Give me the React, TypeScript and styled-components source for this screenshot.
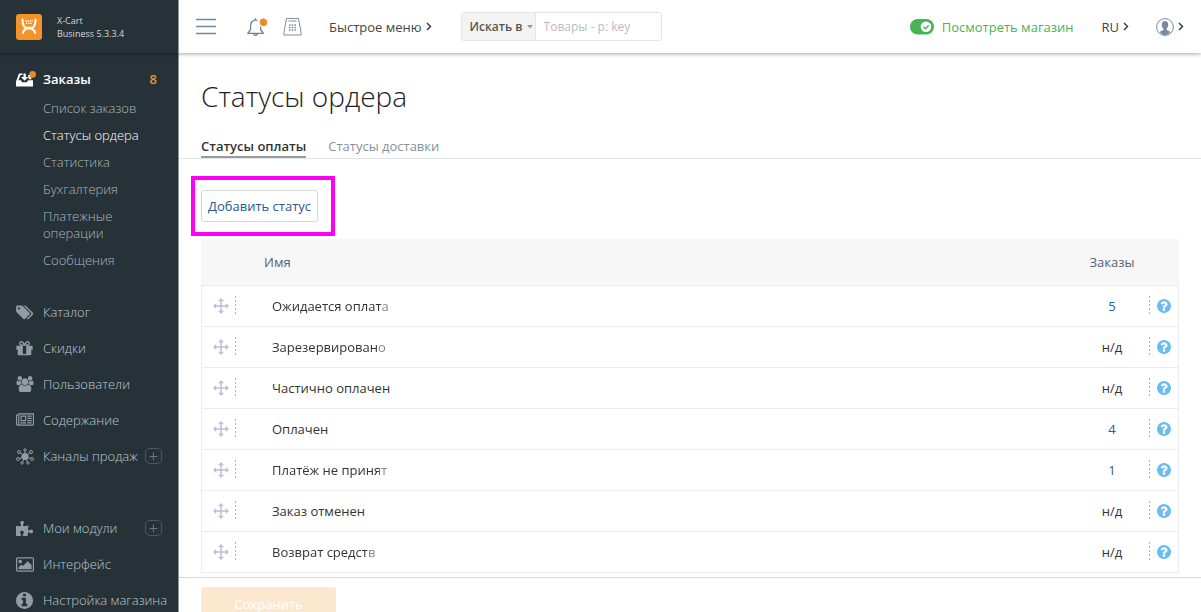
import React from "react";
import styled, { createGlobalStyle } from "styled-components";
import { FaPuzzlePiece } from "react-icons/fa";

const Global = createGlobalStyle`
  *, *::before, *::after { box-sizing: border-box; }
  body { margin: 0; background: #fff; }
  body, button, input { font-family: "Open Sans", "Noto Sans", sans-serif; font-size: 13px; }
  a { text-decoration: none; color: inherit; }
  ul { list-style: none; margin: 0; padding: 0; }
  button { cursor: pointer; }
  svg { display: block; flex: none; }
`;

const Page = styled.div`
  display: flex;
  flex-direction: column;
  height: 100vh;
  overflow: hidden;
  color: #333;
`;

const Header = styled.header`
  display: flex;
  flex: none;
  height: 53px;
  position: relative;
  z-index: 1;
  box-shadow: 0 1px 4px rgba(0, 0, 0, 0.35);
`;

const Brand = styled.a`
  display: flex;
  align-items: center;
  flex: none;
  gap: 15px;
  width: 179px;
  padding-left: 16px;
  background: #263238;
  border-right: 1px solid #8d9599;
  color: #d3d9dc;
  font-size: 9px;
  line-height: 13px;
`;

const TopBar = styled.div`
  display: flex;
  align-items: center;
  flex: 1;
  min-width: 0;
  padding: 0 17px;
  background: #fff;
`;

const IconButton = styled.button<{ $gap: number }>`
  display: flex;
  padding: 0;
  border: 0;
  background: none;
  color: #7189a0;
  margin-right: ${(p) => p.$gap}px;
`;

const MenuButton = styled.button<{ $right: number }>`
  display: flex;
  align-items: center;
  gap: 4px;
  padding: 0;
  border: 0;
  background: none;
  color: #444;
  line-height: 20px;
  white-space: nowrap;
  margin-right: ${(p) => p.$right}px;
`;

const Search = styled.form`
  display: flex;
  width: 201px;
  height: 29px;
  border: 1px solid #e4e4e4;
  border-radius: 3px;
  overflow: hidden;
`;

const SearchScope = styled.button`
  display: flex;
  align-items: center;
  gap: 4px;
  flex: none;
  width: 74px;
  padding: 0 0 0 8px;
  border: 0;
  border-right: 1px solid #e4e4e4;
  background: #f3f3f3;
  color: #555;
  font-size: 12px;
  font-weight: 600;
  white-space: nowrap;
`;

const SearchInput = styled.input`
  flex: 1;
  min-width: 0;
  padding: 0 8px;
  border: 0;
  outline: 0;
  font-size: 12px;
  &::placeholder { color: #bbb; opacity: 1; }
`;

const StoreLink = styled.a`
  display: flex;
  align-items: center;
  gap: 8px;
  margin: 0 28px 0 auto;
  color: #4ab357;
  line-height: 20px;
  white-space: nowrap;
`;

const Body = styled.div`
  display: flex;
  flex: 1;
  min-height: 0;
`;

const Sidebar = styled.nav`
  flex: none;
  width: 179px;
  padding-top: 10px;
  background: #263238;
  border-right: 1px solid #8d9599;
  color: #b3c0c6;
  font-weight: 300;
`;

const Group = styled.ul`
  margin-bottom: 36px;
`;

const NavRow = styled.li<{ $short?: boolean }>`
  display: flex;
  align-items: center;
  height: ${(p) => (p.$short ? 32 : 36)}px;
  padding: 0 16px;
`;

const NavLink = styled.a<{ $active?: boolean }>`
  display: flex;
  align-items: center;
  gap: 9px;
  flex: 1;
  min-width: 0;
  white-space: nowrap;
  color: ${(p) => (p.$active ? "#fff" : "#bdc9cf")};
  font-weight: ${(p) => (p.$active ? 600 : 300)};
`;

const NavIcon = styled.span`
  display: flex;
  flex: none;
  width: 18px;
  color: #919ca3;
`;

const Count = styled.span`
  margin-right: 5px;
  color: #e3943a;
  font-weight: 600;
`;

const AddButton = styled.button`
  display: flex;
  align-items: center;
  justify-content: center;
  flex: none;
  width: 17px;
  height: 16px;
  padding: 0;
  border: 1px solid #4c5a61;
  border-radius: 5px;
  background: none;
  color: #67757c;
`;

const SubMenu = styled.ul`
  margin-bottom: 20px;
`;

const SubLink = styled.a<{ $active?: boolean }>`
  display: block;
  padding: 5px 36px 5px 43px;
  line-height: 17px;
  color: ${(p) => (p.$active ? "#fff" : "#aab7bd")};
`;

const Main = styled.main`
  flex: 1;
  min-width: 0;
`;

const Title = styled.h1`
  margin: 0;
  padding: 23px 22px 0;
  color: #222;
  font-size: 28px;
  line-height: 40px;
  font-weight: 300;
`;

const Tabs = styled.div`
  display: flex;
  gap: 22px;
  margin-top: 20px;
  padding: 0 22px;
  border-bottom: 1px solid #e2e4e6;
`;

const Tab = styled.a<{ $active?: boolean }>`
  height: 22px;
  line-height: 20px;
  font-weight: ${(p) => (p.$active ? 600 : 400)};
  color: ${(p) => (p.$active ? "#333" : "#87929b")};
  border-bottom: 2px solid ${(p) => (p.$active ? "#929da5" : "transparent")};
`;

const Content = styled.div`
  padding: 31px 22px 4px;
`;

const Highlighted = styled.div`
  display: inline-block;
  vertical-align: top;
  position: relative;
  &::after {
    content: "";
    position: absolute;
    inset: -14px -17px -14px -10px;
    border: 4px solid #ff00f6;
    pointer-events: none;
  }
`;

const AddStatus = styled.button`
  display: block;
  height: 32px;
  padding: 0 6px;
  border: 1px solid #d5d8db;
  border-radius: 3px;
  background: #fff;
  color: #2b568f;
`;

const Table = styled.table`
  width: 100%;
  margin-top: 17px;
  border-collapse: separate;
  border-spacing: 0;
  table-layout: fixed;
  line-height: 18px;
`;

const Th = styled.th<{ $w?: number; $align?: string; $left?: number }>`
  height: 47px;
  width: ${(p) => (p.$w ? `${p.$w}px` : "auto")};
  padding: 0 0 0 ${(p) => p.$left ?? 0}px;
  background: #f7f7f7;
  border-bottom: 1px solid #ececec;
  color: #566074;
  font-weight: 400;
  text-align: ${(p) => p.$align ?? "left"};
`;

const Td = styled.td<{ $align?: string; $left?: number }>`
  height: 41px;
  padding: 0 0 0 ${(p) => p.$left ?? 0}px;
  border-bottom: 1px solid #ececec;
  text-align: ${(p) => p.$align ?? "left"};
  &:first-child { border-left: 1px solid #ececec; }
  &:last-child { border-right: 1px solid #ececec; }
`;

const CellTools = styled.div`
  display: flex;
  align-items: center;
`;

const Dots = styled.span<{ $left: number; $right: number }>`
  width: 1px;
  height: 20px;
  margin: 0 ${(p) => p.$right}px 0 ${(p) => p.$left}px;
  background: repeating-linear-gradient(#aeb1ba 0 2px, transparent 2px 4px);
`;

const PlainButton = styled.button`
  display: flex;
  padding: 0;
  border: 0;
  background: none;
`;

const Name = styled.span<{ $fade?: boolean }>`
  ${(p) => p.$fade && "mask-image: linear-gradient(to left, rgba(0,0,0,.6) 7px, #000 9px);"}
`;

const OrderLink = styled.a`
  color: #1f5fa8;
`;

const Footer = styled.footer`
  padding: 9px 22px;
  border-top: 1px solid #d6d6d6;
  background: #fff;
`;

const Save = styled.button`
  width: 135px;
  height: 34px;
  border: 0;
  border-radius: 3px;
  background: #fbe8cf;
  color: #fff;
`;

type GlyphProps = { box: string; d: string; w: number; h: number };
const Glyph = ({ box, d, w, h }: GlyphProps) => (
  <svg width={w} height={h} viewBox={box} fill="currentColor" aria-hidden="true">
    <path d={d} />
  </svg>
);

const TagsIcon = () => (
  <Glyph w={18} h={17} box="-10 0 1990 1792" d="M448 448q0-53-37.5-90.5t-90.5-37.5-90.5 37.5-37.5 90.5 37.5 90.5 90.5 37.5 90.5-37.5 37.500-90.500zm1067 576q0 53-37 90l-491 492q-39 37-91 37-53 0-90-37l-715-716q-38-37-64.5-101t-26.5-117v-416q0-52 38-90t90-38h416q53 0 117 26.5t102 64.5l715 714q37 39 37 91zm384 0q0 53-37 90l-491 492q-39 37-91 37-36 0-59-14t-53-45l470-470q37-37 37-90 0-52-37-91l-715-714q-38-38-102-64.5t-117-26.5h224q53 0 117 26.5t102 64.5l715 714q37 39 37 91z" />
);
const GiftIcon = () => (
  <Glyph w={17} h={17} box="120 100 1552 1600" d="M1056 1356v-716h-320v716q0 25 18 38.5t46 13.5h192q28 0 46-13.5t18-38.5zm-456-844h195l-126-161q-26-31-69-31-40 0-68 28t-28 68 28 68 68 28zm688-96q0-40-28-68t-68-28q-43 0-69 31l-125 161h194q40 0 68-28t28-68zm376 256v320q0 14-9 23t-23 9h-96v416q0 40-28 68t-68 28h-1088q-40 0-68-28t-28-68v-416h-96q-14 0-23-9t-9-23v-320q0-14 9-23t23-9h440q-93 0-158.5-65.5t-65.5-158.5 65.5-158.5 158.5-65.5q107 0 168 77l128 165 128-165q61-77 168-77 93 0 158.5 65.5t65.5 158.5-65.5 158.5-158.5 65.5h440q14 0 23 9t9 23z" />
);
const UsersIcon = () => (
  <Glyph w={18} h={16} box="-64 0 1920 1792" d="M529 896q-162 5-265 128h-134q-82 0-138-40.5t-56-118.5q0-353 124-353 6 0 43.5 21t97.5 42.5 119 21.5q67 0 133-23-5 37-5 66 0 139 81 256zm1071 637q0 120-73 189.5t-194 69.5h-874q-121 0-194-69.5t-73-189.5q0-53 3.5-103.5t14-109 26.5-108.5 43-97.5 62-81 85.5-53.5 111.5-20q10 0 43 21.5t73 48 107 48 135 21.5 135-21.5 107-48 73-48 43-21.5q61 0 111.5 20t85.5 53.5 62 81 43 97.5 26.5 108.5 14 109 3.5 103.5zm-1024-1277q0 106-75 181t-181 75-181-75-75-181 75-181 181-75 181 75 75 181zm704 384q0 159-112.5 271.5t-271.5 112.5-271.5-112.5-112.5-271.5 112.5-271.5 271.5-112.5 271.5 112.5 112.5 271.5zm576 225q0 78-56 118.5t-138 40.5h-134q-103-123-265-128 81-117 81-256 0-29-5-66 66 23 133 23 59 0 119-21.5t97.5-42.5 43.5-21q124 0 124 353zm-128-609q0 106-75 181t-181 75-181-75-75-181 75-181 181-75 181 75 75 181z" />
);
const NewsIcon = () => (
  <Glyph w={18} h={16} box="0 0 2048 1792" d="M1024 512h-384v384h384v-384zm128 640v128h-640v-128h640zm0-768v640h-640v-640h640zm640 768v128h-512v-128h512zm0-256v128h-512v-128h512zm0-256v128h-512v-128h512zm0-256v128h-512v-128h512zm-1536 960v-960h-128v960q0 26 19 45t45 19 45-19 19-45zm1664 0v-1088h-1536v1088q0 33-11 64h1483q26 0 45-19t19-45zm128-1216v1216q0 80-56 136t-136 56h-1664q-80 0-136-56t-56-136v-1088h256v-128h1792z" />
);
const PictureIcon = () => (
  <Glyph w={18} h={17} box="-64 0 1920 1792" d="M576 576q0 80-56 136t-136 56-136-56-56-136 56-136 136-56 136 56 56 136zm1024 384v448h-1408v-192l320-320 160 160 512-512zm96-704h-1600q-13 0-22.5 9.5t-9.5 22.5v1216q0 13 9.5 22.5t22.5 9.5h1600q13 0 22.5-9.5t9.5-22.5v-1216q0-13-9.5-22.5t-22.5-9.5zm160 32v1216q0 66-47 113t-113 47h-1600q-66 0-113-47t-47-113v-1216q0-66 47-113t113-47h1600q66 0 113 47t47 113z" />
);
const InfoIcon = () => (
  <Glyph w={17} h={17} box="128 128 1536 1536" d="M1152 1376v-160q0-14-9-23t-23-9h-96v-512q0-14-9-23t-23-9h-320q-14 0-23 9t-9 23v160q0 14 9 23t23 9h96v320h-96q-14 0-23 9t-9 23v160q0 14 9 23t23 9h448q14 0 23-9t9-23zm-128-896v-160q0-14-9-23t-23-9h-192q-14 0-23 9t-9 23v160q0 14 9 23t23 9h192q14 0 23-9t9-23zm640 416q0 209-103 385.5t-279.5 279.5-385.5 103-385.5-103-279.5-279.5-103-385.5 103-385.5 279.5-279.5 385.5-103 385.5 103 279.5 279.5 103 385.5z" />
);
const HelpIcon = () => (
  <svg width="14" height="14" viewBox="128 128 1536 1536" fill="#6cbcf0" aria-hidden="true">
    <path d="M1024 1376v-192q0-14-9-23t-23-9h-192q-14 0-23 9t-9 23v192q0 14 9 23t23 9h192q14 0 23-9t9-23zm256-672q0-88-55.5-163t-138.5-116-170-41q-243 0-371 213-15 24 8 42l132 100q7 6 19 6 16 0 25-12 53-68 86-92 34-24 86-24 48 0 85.5 26t37.5 59q0 38-20 61t-68 45q-63 28-115.5 86.5t-52.5 125.5v36q0 14 9 23t23 9h192q14 0 23-9t9-23q0-19 21.5-49.5t54.5-49.5q32-18 49-28.5t46-35 44.5-48 28-60.5 12.5-81zm384 192q0 209-103 385.5t-279.5 279.5-385.5 103-385.5-103-279.5-279.5-103-385.5 103-385.5 279.5-279.5 385.5-103 385.5 103 279.5 279.5 103 385.5z" />
  </svg>
);
const ChannelsIcon = () => (
  <svg width="18" height="17" viewBox="0 0 18 17" fill="none" stroke="currentColor" aria-hidden="true">
    <circle cx="9" cy="8.5" r="3.6" fill="currentColor" stroke="none" />
    <path d="M9 2v4M4 4.5l3 2.5M14 4.5l-3 2.5M3 10.5l4-1M15 10.5l-4-1M6.5 14l1.5-3M11.5 14l-1.5-3" />
    <g fill="#263238">
      <circle cx="9" cy="1.9" r="1.2" />
      <circle cx="3" cy="4" r="1.5" />
      <circle cx="15" cy="4" r="1.5" />
      <circle cx="2" cy="11" r="1.5" />
      <circle cx="16" cy="11" r="1.5" />
      <circle cx="6" cy="15" r="1.2" />
      <circle cx="12" cy="15" r="1.2" />
    </g>
  </svg>
);
const OrdersIcon = () => (
  <svg width="20" height="17" viewBox="0 0 20 17" aria-hidden="true">
    <path d="M0 15.500V10.500L3 2.500h3.500V4H4.500L2.500 9.300H5l1 2h5l1-2h5v6.200z" fill="#fff" />
    <path d="M7.500 2.500h2.300V6h2.400L8.600 9.700 5 6h2.500zM12 4h2l1.800 4.300h-3z" fill="#fff" />
    <circle cx="16.600" cy="3.400" r="3.300" fill="#f08c1e" />
  </svg>
);
const PlusIcon = () => (
  <svg width="9" height="9" viewBox="0 0 9 9" stroke="currentColor" aria-hidden="true">
    <path d="M0.500 4.500h8M4.500 0.500v8" />
  </svg>
);
const Logo = () => (
  <svg width="26" height="26" viewBox="0 0 26 26" aria-hidden="true">
    <rect width="26" height="26" rx="3" fill="#f39328" />
    <path d="M6.500 5.500c0 4.500 1 7 3 8.500v1.500c-1.500.5-2.500 1.800-2.500 3.500M19.500 5.500c0 4.500-1 7-3 8.500v1.500c1.500.5 2.500 1.800 2.500 3.500" fill="none" stroke="#fff" strokeWidth="2" strokeLinecap="round" />
    <path d="M9.300 7h7.500M9.800 9.300h6.500" stroke="#fff" strokeWidth="1.300" strokeDasharray="1.500 .8" />
    <path d="M9 12.800h8v2.700H9z" fill="#fff" />
  </svg>
);
const BurgerIcon = () => (
  <svg width="20" height="18" viewBox="0 0 20 18" stroke="currentColor" strokeWidth="1.600" aria-hidden="true">
    <path d="M0 1.500h20M0 8.500h20M0 15.500h20" />
  </svg>
);
const BellIcon = () => (
  <svg width="20" height="20" viewBox="0 0 20 20" fill="none" aria-hidden="true">
    <path d="M8.200 3.100C5 3.700 3.600 6 3.600 9v3.500L.8 16.300h15.600l-2.800-3.800V9.500M8.200 3.100V1.300M8.200 3.100c.8-.1 1.500 0 2.200.2M6.700 16.600c.2 2.300 3.500 2.300 3.700 0" stroke="#6c8298" strokeWidth="1.300" strokeLinejoin="round" />
    <circle cx="16.400" cy="5.300" r="3.700" fill="#f08c1e" />
  </svg>
);
const PosIcon = () => (
  <svg width="19" height="19" viewBox="0 0 19 19" fill="none" stroke="#7c8e9f" aria-hidden="true">
    <path d="M3.500 1.500h12l2.600 14v2.500H.900v-2.500zM5.500 4h8" strokeLinejoin="round" />
    <path d="M6 8h7M6 10.500h7M6 13h7" strokeWidth="1.400" strokeDasharray="1.600 1.100" />
  </svg>
);
const Chevron = () => (
  <svg width="6" height="9" viewBox="0 0 6 9" fill="none" stroke="#333" strokeWidth="1.400" aria-hidden="true">
    <path d="M1 1l3.500 3.500L1 8" />
  </svg>
);
const Caret = () => (
  <svg width="6" height="4" viewBox="0 0 6 4" fill="#999" aria-hidden="true">
    <path d="M0 0h6L3 3.500z" />
  </svg>
);
const ToggleIcon = () => (
  <svg width="24" height="16" viewBox="0 0 24 16" aria-hidden="true">
    <rect width="24" height="15.500" rx="7.700" fill="#46b355" />
    <circle cx="16" cy="7.800" r="5.300" fill="#fff" />
    <path d="M13.500 7.800l2 2 3.200-3.500" fill="none" stroke="#46b355" strokeWidth="1.300" />
  </svg>
);
const AvatarIcon = () => (
  <svg width="18" height="18" viewBox="0 0 18 18" aria-hidden="true">
    <circle cx="9" cy="9" r="8.400" fill="#fff" stroke="#778ba0" />
    <path d="M9 3c2.200 0 3.200 1.500 3.200 3.700 0 2-.8 3.200-1.600 4v1.400c1 .7 2.800.9 3.600 2C12.800 16 11 17 9 17s-3.800-1-5.200-2.900c.8-1.100 2.600-1.300 3.600-2v-1.400c-.8-.8-1.600-2-1.600-4C5.800 4.500 6.800 3 9 3z" fill="#778ba0" />
  </svg>
);
const MoveIcon = () => (
  <svg width="16" height="16" viewBox="0 0 16 16" aria-hidden="true">
    <path d="M8 2v12M2 8h12" stroke="#b9c1d2" strokeWidth="1.500" />
    <path d="M8 0l3 3.200H5zM8 16l3-3.200H5zM0 8l3.200-3v6zM16 8l-3.200-3v6z" fill="#b9c1d2" />
  </svg>
);

const subItems = ["Список заказов", "Статусы ордера", "Статистика", "Бухгалтерия", "Платежные операции", "Сообщения"];

const groups: { label: string; icon: React.ReactNode; add?: boolean }[][] = [
  [
    { label: "Каталог", icon: <TagsIcon /> },
    { label: "Скидки", icon: <GiftIcon /> },
    { label: "Пользователи", icon: <UsersIcon /> },
    { label: "Содержание", icon: <NewsIcon /> },
    { label: "Каналы продаж", icon: <ChannelsIcon />, add: true },
  ],
  [
    { label: "Мои модули", icon: <FaPuzzlePiece size={17} />, add: true },
    { label: "Интерфейс", icon: <PictureIcon /> },
    { label: "Настройка магазина", icon: <InfoIcon /> },
  ],
];

const rows: { name: string; orders?: number; fade?: boolean }[] = [
  { name: "Ожидается оплата", orders: 5, fade: true },
  { name: "Зарезервировано", fade: true },
  { name: "Частично оплачен" },
  { name: "Оплачен", orders: 4 },
  { name: "Платёж не принят", orders: 1, fade: true },
  { name: "Заказ отменен" },
  { name: "Возврат средств", fade: true },
];

export default function App() {
  return (
    <Page>
      <Global />
      <Header>
        <Brand href="#">
          <Logo />
          <span>
            X-Cart
            <br />
            Business 5.3.3.4
          </span>
        </Brand>
        <TopBar>
          <IconButton $gap={31} aria-label="Меню"><BurgerIcon /></IconButton>
          <IconButton $gap={16} aria-label="Уведомления"><BellIcon /></IconButton>
          <IconButton $gap={27} aria-label="Касса"><PosIcon /></IconButton>
          <MenuButton $right={29}>Быстрое меню <Chevron /></MenuButton>
          <Search>
            <SearchScope type="button">Искать в <Caret /></SearchScope>
            <SearchInput aria-label="Поиск" placeholder="Товары - p: key" />
          </Search>
          <StoreLink href="#"><ToggleIcon />Посмотреть магазин</StoreLink>
          <MenuButton $right={27}>RU <Chevron /></MenuButton>
          <MenuButton $right={0} aria-label="Профиль"><AvatarIcon /><Chevron /></MenuButton>
        </TopBar>
      </Header>
      <Body>
        <Sidebar>
          <ul>
            <NavRow $short>
              <NavLink href="#" $active>
                <NavIcon><OrdersIcon /></NavIcon>
                Заказы
              </NavLink>
              <Count>8</Count>
            </NavRow>
          </ul>
          <SubMenu>
            {subItems.map((label, i) => (
              <li key={label}><SubLink href="#" $active={i === 1}>{label}</SubLink></li>
            ))}
          </SubMenu>
          {groups.map((items, i) => (
            <Group key={i}>
              {items.map((item) => (
                <NavRow key={item.label}>
                  <NavLink href="#"><NavIcon>{item.icon}</NavIcon>{item.label}</NavLink>
                  {item.add && <AddButton aria-label={`${item.label}: добавить`}><PlusIcon /></AddButton>}
                </NavRow>
              ))}
            </Group>
          ))}
        </Sidebar>
        <Main>
          <Title>Статусы ордера</Title>
          <Tabs>
            <Tab href="#" $active>Статусы оплаты</Tab>
            <Tab href="#">Статусы доставки</Tab>
          </Tabs>
          <Content>
            <Highlighted><AddStatus>Добавить статус</AddStatus></Highlighted>
            <Table>
              <thead>
                <tr>
                  <Th $w={62} />
                  <Th $left={1}>Имя</Th>
                  <Th $w={72} $align="center">Заказы</Th>
                  <Th $w={31} />
                </tr>
              </thead>
              <tbody>
                {rows.map((row) => (
                  <tr key={row.name}>
                    <Td $left={11}>
                      <CellTools><MoveIcon /><Dots $left={6} $right={0} /></CellTools>
                    </Td>
                    <Td $left={9}><Name $fade={row.fade}>{row.name}</Name></Td>
                    <Td $align="center">
                      {row.orders ? <OrderLink href="#">{row.orders}</OrderLink> : "н/д"}
                    </Td>
                    <Td>
                      <CellTools>
                        <Dots $left={1} $right={7} />
                        <PlainButton aria-label="Справка"><HelpIcon /></PlainButton>
                      </CellTools>
                    </Td>
                  </tr>
                ))}
              </tbody>
            </Table>
          </Content>
          <Footer><Save>Сохранить</Save></Footer>
        </Main>
      </Body>
    </Page>
  );
}
